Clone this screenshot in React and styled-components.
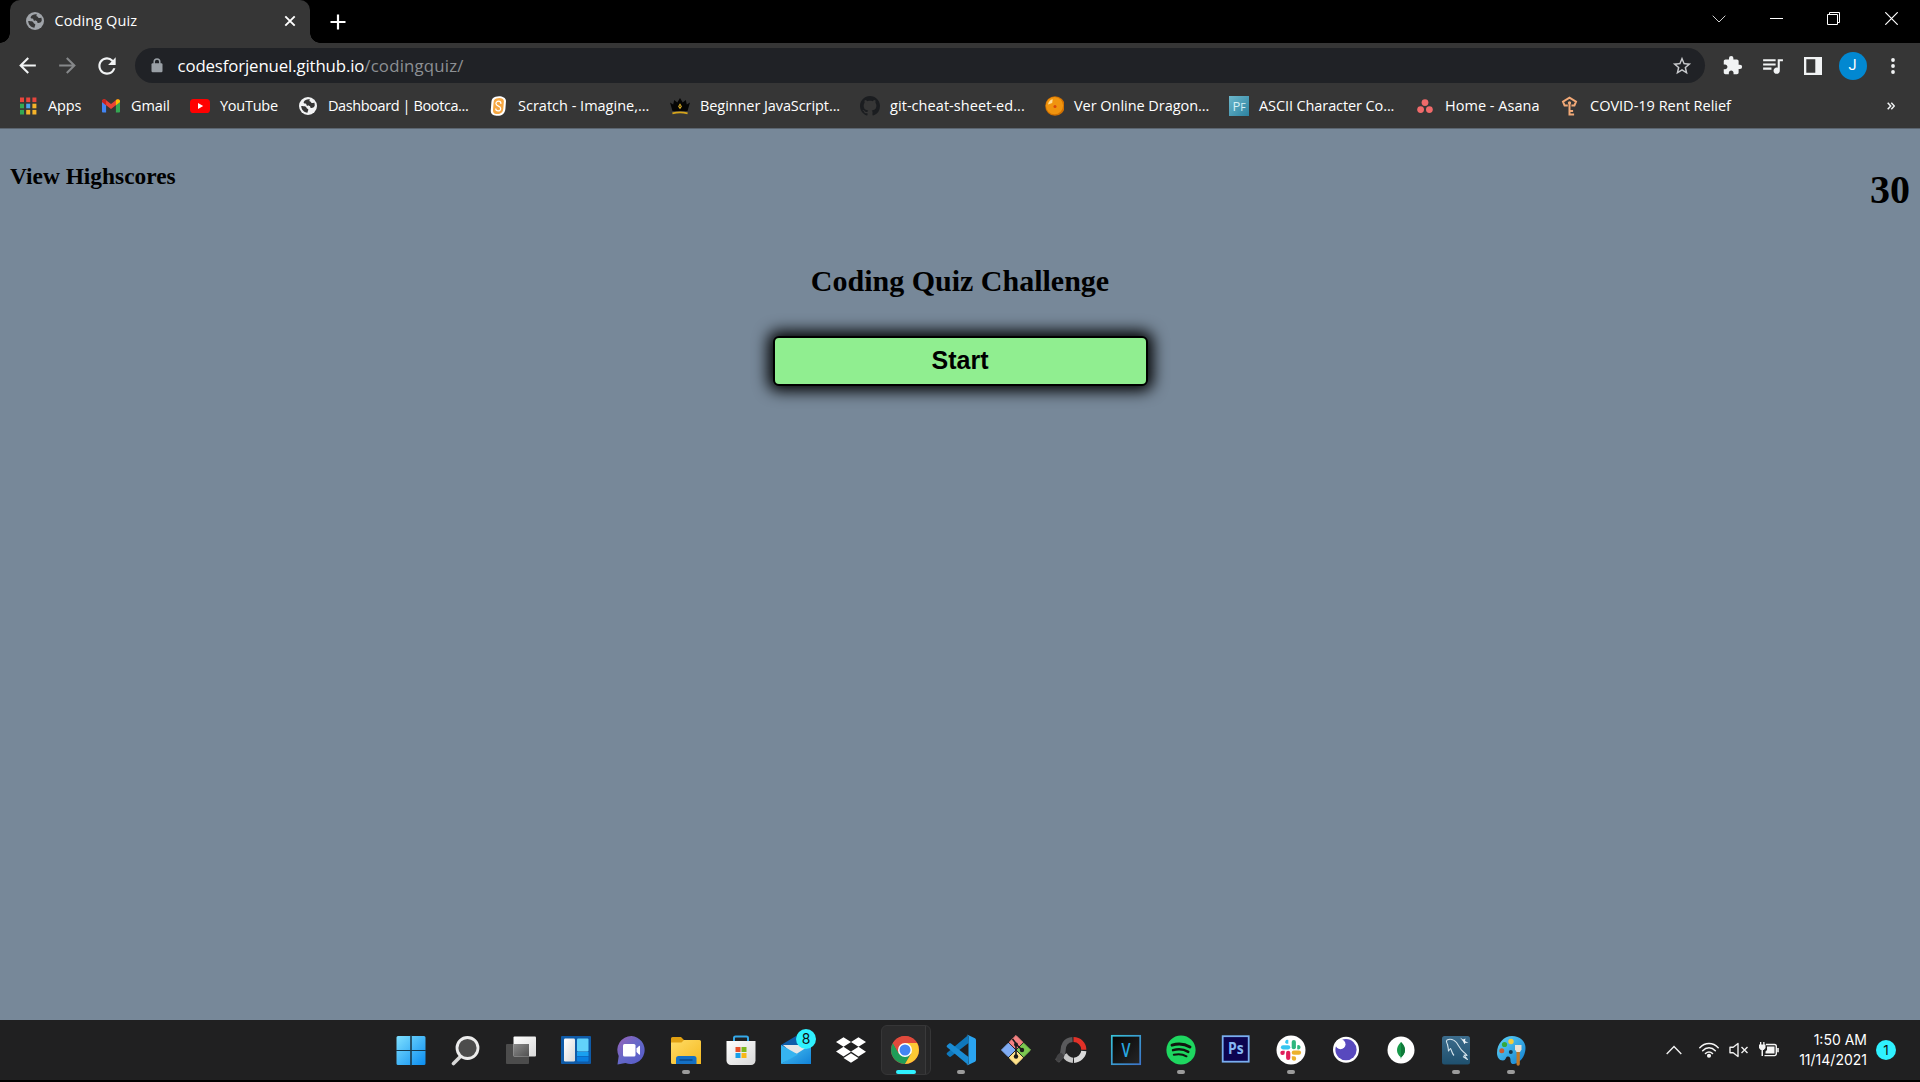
import React from "react";
import styled, { createGlobalStyle, css } from "styled-components";
import {
  MdExtension,
  MdQueueMusic,
  MdStarBorder,
  MdArrowBack,
  MdArrowForward,
  MdRefresh,
} from "react-icons/md";
import { FaDropbox } from "react-icons/fa";

const Global = createGlobalStyle`
  * { box-sizing: border-box; }
  body { margin: 0; background: #000; overflow: hidden; }
  svg { display: block; flex: none; }
`;

const ui = `"Open Sans", "Noto Sans", sans-serif`;

const Screen = styled.div`
  display: flex;
  flex-direction: column;
  width: 1920px;
  height: 1082px;
  background: #000;
`;

/* ---------- tab strip ---------- */

const TabStrip = styled.div`
  display: flex;
  height: 43px;
  background: #000;
`;

const TabCurve = styled.div`
  width: 10px;
  height: 43px;
  background: radial-gradient(circle 10px at ${(p) => (p.$right ? "100%" : "0")} 0, #000 95%, #363636 100%) 0 33px / 10px 10px no-repeat;
`;

const Tab = styled.div`
  display: flex;
  align-items: center;
  width: 300px;
  height: 43px;
  padding: 0 14px 1px 16px;
  border-radius: 10px 10px 0 0;
  background: #363636;
`;

const TabTitle = styled.span`
  flex: 1;
  margin-left: 10.5px;
  color: #fff;
  font: 14.5px/20px ${ui};
  letter-spacing: 0.1px;
  white-space: nowrap;
`;

const NewTab = styled.div`
  display: flex;
  align-items: center;
  margin-left: 9.5px;
`;

const WindowControls = styled.div`
  display: flex;
  margin-left: auto;
`;

const WindowControl = styled.div`
  display: flex;
  align-items: center;
  justify-content: center;
  width: 57.5px;
  height: 37px;
`;

/* ---------- toolbar ---------- */

const Toolbar = styled.div`
  display: flex;
  align-items: center;
  height: 45px;
  padding: 0 7.5px 0 7px;
  background: #363636;
`;

const ToolCell = styled.div`
  display: flex;
  align-items: center;
  justify-content: center;
  width: 40px;
  height: 40px;
`;

const Omnibox = styled.div`
  display: flex;
  align-items: center;
  flex: 1;
  height: 35px;
  margin: 0 7.5px 0 8px;
  padding: 0 12px 0 16px;
  border-radius: 18px;
  background: #202226;
`;

const Url = styled.div`
  flex: 1;
  margin-left: 14.5px;
  color: #fff;
  font: 16.8px/24px ${ui};
  letter-spacing: -0.12px;
  white-space: nowrap;
`;

const UrlPath = styled.span`
  color: #8d9094;
  letter-spacing: 0.2px;
`;

const Avatar = styled.div`
  width: 28px;
  height: 28px;
  border-radius: 50%;
  background: #0288d1;
  color: #fff;
  font: 14.5px/28px Roboto, sans-serif;
  text-align: center;
`;

/* ---------- bookmarks ---------- */

const Bookmarks = styled.div`
  display: flex;
  align-items: center;
  gap: 20px;
  height: 41px;
  padding: 0 25px 5px 18px;
  border-bottom: 1px solid #5b6570;
  background: #363636;
`;

const Bookmark = styled.div`
  display: flex;
  align-items: center;
  gap: 10px;
`;

const BookmarkLabel = styled.span`
  width: ${(p) => p.$width}px;
  color: #fff;
  font: 14.5px/20px ${ui};
  letter-spacing: ${(p) => p.$spacing || 0}px;
  white-space: nowrap;
`;

const Centered = styled.span`
  display: flex;
  justify-content: center;
  width: 20px;
`;

const Overflow = styled.div`
  margin-left: auto;
`;

/* ---------- page ---------- */

const Page = styled.main`
  flex: 1;
  background: #778899;
  color: #000;
  font-family: "Liberation Serif", serif;
`;

const PageHeader = styled.header`
  display: flex;
  justify-content: space-between;
  padding: 0 10px;
`;

const Highscores = styled.h3`
  margin: 34px 0 0;
  font-size: 23.4px;
  line-height: 27px;
`;

const Timer = styled.h1`
  margin: 38px 0 0;
  font-size: 40px;
  line-height: 46px;
`;

const Quiz = styled.section`
  display: flex;
  flex-direction: column;
  align-items: center;
  margin-top: 51px;
`;

const QuizTitle = styled.h2`
  margin: 0;
  font-size: 30px;
  line-height: 34px;
`;

const StartButton = styled.button`
  width: 375px;
  height: 50px;
  margin: 38px 0 0;
  padding: 0 0 2px;
  border: 2px solid #000;
  border-radius: 6px;
  background: #90ee90;
  box-shadow: 0 0 15px 5px #000;
  color: #000;
  font: bold 25px "Liberation Sans", sans-serif;
`;

/* ---------- taskbar ---------- */

const Taskbar = styled.footer`
  display: grid;
  grid-template-columns: 1fr auto 1fr;
  align-items: center;
  height: 60px;
  margin-bottom: 2px;
  background: #202021;
`;

const AppRow = styled.div`
  display: flex;
  grid-column: 2;
  padding-left: 1px;
`;

const AppSlot = styled.div`
  position: relative;
  display: flex;
  align-items: center;
  justify-content: center;
  width: 55px;
  height: 60px;
  ${(p) =>
    p.$state &&
    css`
      &::after {
        content: "";
        position: absolute;
        bottom: 6px;
        left: 50%;
        width: ${p.$state === "active" ? 20 : 8}px;
        height: 4px;
        border-radius: 2px;
        background: ${p.$state === "active" ? "#2ff1ff" : "#9b9b9b"};
        transform: translateX(-50%);
      }
    `}
`;

const ActiveFrame = styled.div`
  display: flex;
  align-items: center;
  justify-content: center;
  width: 50px;
  height: 50px;
  padding-right: 1px;
  border: 1px solid #363637;
  border-radius: 6px;
  background: linear-gradient(90deg, #2b2b2c 43px, #3a3a3b 43px, #3a3a3b 44px, #262627 44px);
`;

const Count = styled.span`
  position: absolute;
  top: 9px;
  right: 7px;
  width: 20px;
  height: 20px;
  border-radius: 50%;
  background: #2ff1ff;
  color: #111;
  font: 14px/20px Inter, sans-serif;
  text-align: center;
`;

const Tray = styled.div`
  display: flex;
  align-items: center;
  justify-content: flex-end;
  padding-right: 24px;
`;

const TrayIcons = styled.div`
  display: flex;
  align-items: center;
  gap: 10px;
`;

const Expand = styled.div`
  margin-right: 7px;
`;

const Clock = styled.div`
  width: 88px;
  color: #fff;
  font: 14px/20px Inter, sans-serif;
  text-align: right;
`;

const Notice = styled.div`
  width: 20px;
  height: 20px;
  margin-left: 9px;
  border-radius: 50%;
  background: #2ff1ff;
  color: #111;
  font: 13.5px/20px Inter, sans-serif;
  text-align: center;
`;

/* ---------- drawings ---------- */

const Globe = ({ ball, land }) => (
  <svg width="18" height="18" viewBox="0 0 18 18">
    <circle cx="9" cy="9" r="9" fill={ball} />
    <path
      d="M11 2.300C8.400 1.800 5.800 2.700 4.700 4.900c-.3 1 .6 1.500 1.600 1.600 1.200 0 1.100 1 1.200 1.800.8.800 2.200.2 3.200.7.9.6.3 1.700 1.200 2 1.500.2 3.200-.5 3.800-2.200.2-1.200 0-2.400-.5-3.400-.8.5-1.300.9-2.300.6-1-.2-.8-1.200-1.700-1.500-1-.2-1-1.200-.2-2.200z"
      fill={land}
    />
    <path d="M2.200 9c1.500.3 3.200-.2 4.600.8.9.7.6 1.700 1.600 1.900 1 .1 1.200 1 .7 1.900-.5.8-.1 1.300-.7 2.100C5 15.400 2.300 12.700 2.200 9z" fill={land} />
  </svg>
);

const AppsGrid = () => {
  const colors = ["#e8453c", "#e8453c", "#e8453c", "#34a853", "#4aa3f0", "#f5b32a", "#34a853", "#f5b32a", "#f5b32a"];
  return (
    <svg width="20" height="18" viewBox="0 0 20 18">
      {colors.map((c, i) => (
        <rect key={i} x={2 + (i % 3) * 6.2} y={0.5 + Math.floor(i / 3) * 6.2} width="4" height="4.6" fill={c} />
      ))}
    </svg>
  );
};

const Gmail = () => (
  <svg width="20" height="20" viewBox="0 0 20 20">
    <path d="M1 5v10.400c0 .7.500 1.200 1.200 1.200h2.900V8.500z" fill="#4285f4" />
    <path d="M19 5v10.400c0 .7-.5 1.200-1.200 1.200h-2.900V8.500z" fill="#34a853" />
    <path d="M1 5.200C1 3.300 3.200 2.700 4.500 3.700L10 7.900l5.500-4.200C16.800 2.700 19 3.300 19 5.200v.9L10 12.900 1 6.100z" fill="#ea4335" />
    <path d="M1 5.200C1 4 2 3.200 3 3.200c.8 0 1.500.4 2.100.9v5.100L1 6.100z" fill="#c5221f" />
    <path d="M19 5.200c0-1.200-1-2-2-2-.8 0-1.500.4-2.100.9v5.100L19 6.100z" fill="#fbbc04" />
  </svg>
);

const YouTube = () => (
  <svg width="20" height="20" viewBox="0 0 20 20">
    <rect y="3" width="20" height="14" rx="3.600" fill="#f00" />
    <path d="M8 7v6l5.200-3z" fill="#fff" />
  </svg>
);

const Scratch = () => (
  <svg width="20" height="20" viewBox="0 0 20 20">
    <path d="M7.500.8C11.500-.6 18 .5 18 5l-.6 8c-.4 5-4.400 7.300-9 6.800C4.200 19.500 2.500 17.500 2.800 14l.6-8C3.600 3 5 1.500 7.500.8z" fill="#fff" />
    <path d="M8.300 2.500c3-1 7.700-.6 7.600 2.700l-.6 7.500c-.4 4-3 5.600-6.700 5.300-2.900-.2-3.800-1.600-3.600-4.300l.6-7.400C5.700 4.200 6.600 3 8.300 2.500z" fill="#f6a742" />
    <path d="M13 7.900c-.1-1.700-1-2.700-2.400-2.700-1.500 0-2.700 1-2.700 2.400 0 3 4.800 2 4.800 4.800 0 1.500-1.200 2.500-2.700 2.500-1.400 0-2.300-.9-2.300-2.400" fill="none" stroke="#fff" strokeWidth="1.200" />
  </svg>
);

const Crown = () => (
  <svg width="20" height="20" viewBox="0 0 20 20">
    <path d="M0 6.500l3.200 2L4.200 4 7.300 6.500 10 2l2.700 4.500L15.800 4l1 4.500L20 6.500 17.500 15h-15z" fill="#050505" />
    <path d="M10 7.300l1.900 3.200L10 13.200l-1.900-2.700z" fill="#e0b020" />
    <circle cx="10" cy="10.300" r=".8" fill="#222" />
    <path d="M2.400 17.400c4.500-1.200 10.700-1.200 15.200 0" stroke="#d6a51b" strokeWidth="1.800" fill="none" />
  </svg>
);

const GitHub = () => (
  <svg width="20" height="20" viewBox="0 0 16 16">
    <path
      fill="#1b1d20"
      d="M8 0C3.580 0 0 3.580 0 8c0 3.540 2.290 6.530 5.470 7.590.4.070.55-.17.55-.38 0-.19-.01-.82-.01-1.490-2.010.37-2.530-.49-2.690-.94-.09-.23-.48-.94-.82-1.130-.28-.15-.68-.52-.01-.53.63-.01 1.080.58 1.230.82.72 1.210 1.870.87 2.330.66.07-.52.28-.87.51-1.070-1.780-.2-3.640-.89-3.640-3.950 0-.87.31-1.590.82-2.150-.08-.2-.36-1.020.08-2.120 0 0 .67-.21 2.200.82.64-.18 1.320-.27 2-.27s1.360.09 2 .27c1.530-1.040 2.200-.82 2.200-.82.44 1.100.16 1.920.08 2.120.51.56.82 1.270.82 2.150 0 3.070-1.870 3.750-3.650 3.950.29.25.54.73.54 1.480 0 1.070-.01 1.930-.01 2.200 0 .21.15.46.55.38A8.010 8.010 0 0 0 16 8c0-4.420-3.580-8-8-8z"
    />
  </svg>
);

const DragonBall = () => (
  <svg width="20" height="20" viewBox="0 0 20 20">
    <circle cx="11" cy="10" r="9.800" fill="#d07000" />
    <circle cx="10.500" cy="9.600" r="8.600" fill="#f0940e" />
    <path d="M4 8.500c.5-3 2.200-4.800 4.700-5.300L8.200 7z" fill="#ffdf98" />
    <circle cx="11" cy="10.500" r="1.500" fill="#d8480c" />
  </svg>
);

const TileText = styled.text`
  font: ${(p) => p.$font};
  text-anchor: middle;
`;

const Pf = () => (
  <svg width="20" height="20" viewBox="0 0 20 20">
    <defs>
      <linearGradient id="pf" x1="0" y1="0" x2="1" y2="1">
        <stop offset="0" stopColor="#6db8cc" />
        <stop offset="1" stopColor="#2c82a0" />
      </linearGradient>
    </defs>
    <rect width="20" height="20" fill="url(#pf)" />
    <TileText x="10" y="15" fill="#d6f0f5" $font='13px "Open Sans", sans-serif'>
      P<tspan fontSize="10.500">F</tspan>
    </TileText>
  </svg>
);

const Asana = () => (
  <svg width="20" height="20" viewBox="0 0 20 20">
    <g fill="#f06a6a">
      <circle cx="10" cy="6.600" r="3.400" />
      <circle cx="5.600" cy="13.600" r="3.400" />
      <circle cx="14.400" cy="13.600" r="3.400" />
    </g>
  </svg>
);

const RentKey = () => (
  <svg width="20" height="20" viewBox="0 0 20 20">
    <g fill="none" stroke="#f2a977" strokeWidth="2">
      <path d="M9.500 19.500V7M9.500 18.500h4.600M9.500 15h3.600" />
      <path d="M7.800 9.600H4.600L3 5.600 9.500 1.600l6.500 4-1.600 4h-3" />
    </g>
    <circle cx="9.500" cy="6.800" r="1.600" fill="#f2a977" />
  </svg>
);

const Gradient = ({ id, from, mid, to, down }) => (
  <linearGradient id={id} x1="0" y1="0" x2={down ? 0 : 1} y2="1">
    <stop offset="0" stopColor={from} />
    {mid && <stop offset=".5" stopColor={mid} />}
    <stop offset="1" stopColor={to} />
  </linearGradient>
);

const Gradients = () => (
  <svg width="0" height="0" aria-hidden="true">
    <defs>
      <Gradient id="win" from="#7fe0ff" to="#0a8df0" />
      <Gradient id="folder" from="#ffdc66" to="#f5b920" />
      <Gradient id="white" from="#fff" to="#d8d8d8" />
      <Gradient id="grey" from="#8a8a8a" to="#505050" />
      <Gradient id="chat" from="#9a62b8" mid="#6468c8" to="#5558c8" />
      <Gradient id="mail" from="#4cc6f4" to="#1282d8" />
      <Gradient id="dark" from="#050505" to="#262626" />
      <Gradient id="vframe" from="#38c2d8" to="#3c74c8" />
      <Gradient id="sql" from="#3c6c8c" to="#1f506e" down />
      <Gradient id="paint" from="#5fd4f8" to="#1180d0" />
    </defs>
  </svg>
);

const Icon = ({ children }) => (
  <svg width="32" height="32" viewBox="0 0 32 32">
    {children}
  </svg>
);

const Windows = () => (
  <Icon>
    <path d="M3 2h12.500v14H1.500V3.500A1.500 1.500 0 0 1 3 2z M16.500 2H29a1.500 1.500 0 0 1 1.500 1.500V16h-14z M1.500 17h14v14H3a1.500 1.500 0 0 1-1.500-1.500z M16.500 17h14v12.500A1.500 1.500 0 0 1 29 31H16.500z" fill="url(#win)" />
    <path d="M16 1v31M1 16.500h30" stroke="#15384d" strokeWidth="1" />
  </Icon>
);
const Search = () => (
  <Icon>
    <path d="M11 22l-7.500 7.500" stroke="#d8d8d8" strokeWidth="3.600" strokeLinecap="round" />
    <circle cx="17.500" cy="14" r="10.500" fill="#4c4c4c" stroke="#ececec" strokeWidth="2.800" />
  </Icon>
);
const TaskView = () => (
  <Icon>
    <rect x="1" y="10" width="23" height="20" rx="1" fill="#4c4c4c" />
    <rect x="8.500" y="2.500" width="22.500" height="20" rx="1" fill="url(#white)" />
    <rect x="8.500" y="10" width="15.500" height="12.500" fill="url(#grey)" />
  </Icon>
);
const Widgets = () => (
  <Icon>
    <rect x="1" y="2" width="30" height="28" rx="1" fill="#0f5ba8" />
    <rect x="4" y="4.500" width="11" height="23" rx="1.200" fill="url(#white)" />
    <rect x="17" y="4.500" width="11.500" height="13" rx="1" fill="#62d2fb" />
    <path d="M17 18h11.500v4H17z" fill="#1aa0f0" />
    <path d="M17 22.500h11.500v4a1 1 0 0 1-1 1H18a1 1 0 0 1-1-1z" fill="#0a7fe0" />
  </Icon>
);
const Chat = () => (
  <Icon>
    <path d="M16.500 2a14 14 0 1 1-6 27L2.500 30.500l1.200-8.500A14 14 0 0 1 16.500 2z" fill="url(#chat)" />
    <rect x="8" y="10" width="12.500" height="12.500" rx="1.500" fill="#fff" />
    <path d="M21.500 14.500l2.500-2.500c.6-.6 1-.2 1 .5v7.500c0 .7-.4 1.100-1 .5L21.500 18z" fill="#fff" />
  </Icon>
);
const Explorer = () => (
  <Icon>
    <path d="M1 4.500A1.500 1.500 0 0 1 2.500 3H11l3.500 3.500L12 11H1z" fill="#e0a012" />
    <path d="M1 8.500h10.500L14 6h15.500A1.500 1.500 0 0 1 31 7.500V30H2.500A1.500 1.500 0 0 1 1 28.500z" fill="url(#folder)" />
    <path d="M6 30v-5.500A2.500 2.500 0 0 1 8.500 22H24a2.500 2.500 0 0 1 2.500 2.500V30z" fill="#1470c4" />
    <path d="M9.500 26h13" stroke="#0a4a8c" strokeWidth="1.600" />
  </Icon>
);
const Store = () => (
  <Icon>
    <path d="M9 9V4a1.500 1.500 0 0 1 1.500-1.500h11A1.500 1.500 0 0 1 23 4v5" fill="none" stroke="#35a8e8" strokeWidth="2" />
    <path d="M1.500 7h29v19.500A4.500 4.500 0 0 1 26 31H6a4.500 4.500 0 0 1-4.500-4.500z" fill="url(#white)" />
    <path d="M10.500 13h5v5h-5z" fill="#e8502a" />
    <path d="M16.500 13h5v5h-5z" fill="#7db81c" />
    <path d="M10.500 19h5v5h-5z" fill="#18a0e8" />
    <path d="M16.500 19h5v5h-5z" fill="#f8b818" />
  </Icon>
);
const Mail = () => (
  <Icon>
    <path d="M1 11L16 2l15 9v6H1z" fill="#0f5ca8" />
    <path d="M3 11h26l-7 10-10-2z" fill="#e6e6e6" />
    <path d="M31 10.500V30H1z" fill="url(#mail)" />
    <path d="M1 11l17 9.500L1 30z" fill="#36b4f0" />
  </Icon>
);
const Dropbox = () => <FaDropbox size={30} color="#fff" />;
const Chrome = () => (
  <Icon>
    <circle cx="16" cy="16" r="14" fill="#e04a3c" />
    <path d="M3.900 9A14 14 0 0 0 16 30l6.100-10.500-6.100-3.500-6.100 3.500z" fill="#1f9d58" />
    <path d="M28.100 9A14 14 0 0 1 16 30l6.200-10.500L16 9z" fill="#fcc934" />
    <path d="M3.900 9A14 14 0 0 1 28.100 9H16l-6 10.500z" fill="#e04a3c" />
    <circle cx="16" cy="16" r="7" fill="#fff" />
    <circle cx="16" cy="16" r="5.500" fill="#4285f4" />
  </Icon>
);
const VSCode = () => (
  <Icon>
    <path d="M23 1.200L23.500 9 6 22.500c-.6.500-1.300.5-1.900 0l-2-1.800c-.6-.6-.6-1.300 0-1.900z" fill="#0f78bc" />
    <path d="M23 30.800L23.500 23 6 9.500c-.6-.5-1.300-.5-1.900 0l-2 1.800c-.6.600-.6 1.300 0 1.900z" fill="#1a8cd4" />
    <path d="M23 1l7 3.300c.6.300 1 .9 1 1.600v20.200c0 .7-.4 1.300-1 1.600L23 31c-.8.300-1 .1-1.500-.5 1 .5 2-.2 2-1.300V2.800c0-1.100-1-1.800-2-1.300.5-.6.700-.8 1.500-.5z" fill="#2aa4f0" />
  </Icon>
);
const Git = () => (
  <Icon>
    <g strokeLinejoin="round" strokeWidth="1">
      <path d="M16 1.500l6.800 6.800L16 15 9.200 8.300z" fill="#f48282" stroke="#f48282" />
      <path d="M23.700 9.200l6.800 6.800-6.800 6.800L17 16z" fill="#7cc850" stroke="#7cc850" />
      <path d="M16 17l6.800 6.800L16 30.500l-6.800-6.700z" fill="#ffe28a" stroke="#ffe28a" />
      <path d="M8.300 9.200L15 16l-6.700 6.800L1.500 16z" fill="#80acf4" stroke="#80acf4" />
    </g>
    <path d="M12.500 5l3.500 4.500v13M16.500 10.500l5 5" fill="none" stroke="#1a1a1a" strokeWidth="1.600" />
    <circle cx="16" cy="10.500" r="2" fill="#1a1a1a" />
    <circle cx="22" cy="16" r="2.200" fill="#1a1a1a" />
    <circle cx="16" cy="22.500" r="2.200" fill="#1a1a1a" />
  </Icon>
);
const Ring = () => (
  <Icon>
    <g fill="none" strokeWidth="5.200">
      <path d="M18.500 5.500A10.300 10.300 0 0 1 28.800 15.800" stroke="#e23128" />
      <path d="M28.800 17A10.300 10.300 0 0 1 19 26.300" stroke="#dadada" />
      <path d="M18 26.300A10.300 10.300 0 0 1 9.500 20.500" stroke="#c8c8c8" />
      <path d="M17.500 5.500C10 6 8 12 8 17c0 5-2.500 6-6 10" stroke="#5a5a5c" />
    </g>
    <path d="M2 28c-2-4 0-8 4-9.500l3 3c0 3-3 6-7 6.500z" fill="#424244" />
  </Icon>
);
const Vegas = () => (
  <Icon>
    <rect x="1.800" y="1.800" width="28.400" height="28.400" fill="url(#dark)" stroke="url(#vframe)" strokeWidth="1.700" />
    <TileText x="16" y="23" fill="#28a8e0" $font='600 20px "Open Sans", sans-serif' transform="translate(4.500 0) scale(.72 1)">
      V
    </TileText>
  </Icon>
);
const Spotify = () => (
  <Icon>
    <circle cx="16" cy="16" r="14.600" fill="#1ed760" />
    <g fill="none" stroke="#10160f" strokeLinecap="round">
      <path d="M7 11.200c6-1.800 13-1.100 18 1.900" strokeWidth="2.900" />
      <path d="M8 16.200c5-1.500 11-.9 15.300 1.700" strokeWidth="2.400" />
      <path d="M8.800 20.800c4.500-1.200 9-.7 12.700 1.500" strokeWidth="2" />
    </g>
  </Icon>
);
const Photoshop = () => (
  <Icon>
    <rect x="2.700" y="2.200" width="26" height="25.500" fill="#0c0450" stroke="#79aef0" strokeWidth="1.800" />
    <TileText x="15.800" y="20.500" fill="#84b8f4" $font='bold 16px "Open Sans", sans-serif' transform="translate(2 0) scale(.87 1)">
      Ps
    </TileText>
  </Icon>
);
const Slack = () => (
  <Icon>
    <circle cx="16" cy="16" r="14.500" fill="#fff" />
    <g strokeWidth="4.200" strokeLinecap="round">
      <path d="M8 13.300h5.200" stroke="#36c5f0" />
      <path d="M18.800 8v5.200" stroke="#2eb67d" />
      <path d="M18.800 18.700H24" stroke="#ecb22e" />
      <path d="M13.200 18.800V24" stroke="#e01e5a" />
    </g>
    <path d="M13.300 6a2 2 0 1 0-2 3.800h2z" fill="#36c5f0" />
    <path d="M22.700 15.300a2.200 2.200 0 1 0 0-4.200 2 2 0 0 0-.5 1.500v2.700z" fill="#2eb67d" />
    <path d="M16.800 22.300v2a2.200 2.200 0 1 0 2-2z" fill="#ecb22e" />
    <path d="M9.700 16.700h-2a2.200 2.200 0 1 0 2 2z" fill="#e01e5a" />
  </Icon>
);
const Insomnia = () => (
  <Icon>
    <circle cx="16" cy="15.700" r="13" fill="#fff" />
    <circle cx="16" cy="15.700" r="10.600" fill="#5849be" />
    <circle cx="10.500" cy="10.200" r="5" fill="#fff" />
  </Icon>
);
const Mongo = () => (
  <Icon>
    <circle cx="16" cy="16" r="13.500" fill="#fff" />
    <path d="M16 8c3 3 4 5.500 4 8.200 0 3-1.700 5-3.600 6.800l-.2 1.500h-.5l-.2-1.500c-2-1.800-3.500-3.800-3.500-6.800C12 13.500 13 11 16 8z" fill="#17994a" />
    <path d="M16 8c3 3 4 5.500 4 8.200 0 3-1.700 5-3.600 6.800H16z" fill="#107a3a" />
  </Icon>
);
const MySql = () => (
  <Icon>
    <rect x="2" y="2" width="28" height="28.500" rx="2.500" fill="url(#sql)" />
    <g fill="none" stroke="#d4e4ec" strokeWidth="1.100" strokeLinejoin="round">
      <path d="M7 6c3-1.500 7-.5 9.500 2.500 2.500 3.500 4 7.500 7 9.500 1.500 1 2.500 2 3.500 3.500l-3-.5 3.500 4.500-4.500-3" />
      <path d="M7 6c-1.500 1.500 0 3 .5 4.500.5 2 .8 4 1 6.500l2-2.500c1.500 2 1 4.500 3.500 7" />
    </g>
    <path d="M20 3.500l3 2 2.500-1-.5 2.500 3.500 2-3-.3-1 1.500-1.500-3z" fill="#eef4f8" />
  </Icon>
);
const Paint = () => (
  <Icon>
    <path d="M17 2c8 0 13.500 5 13.500 12 0 9-6.500 15.500-11.500 16-3 .3-3.500-2-3.500-4s-1-4-3-3.500-1.500 4-4.500 4C4 26.500 2 23 2 19 2 9.500 9 2 17 2z" fill="url(#paint)" />
    <circle cx="16" cy="7.500" r="2.700" fill="#f4cc3c" />
    <circle cx="9.500" cy="10.500" r="2.600" fill="#34a83c" />
    <circle cx="6.800" cy="16.800" r="2.500" fill="#c85a30" />
    <circle cx="15.800" cy="18" r="2" fill="#14384e" />
    <path d="M21.500 17h3.300V30a1.600 1.600 0 0 1-3.300 0z" fill="#c07828" />
    <path d="M20 11h6.500v4.500L25 18h-3.500L20 15.500z" fill="#e8e0d4" />
  </Icon>
);

const taskbarApps = [
  { Art: Windows },
  { Art: Search },
  { Art: TaskView },
  { Art: Widgets },
  { Art: Chat },
  { Art: Explorer, state: "open" },
  { Art: Store },
  { Art: Mail, count: 8 },
  { Art: Dropbox },
  { Art: Chrome, state: "active" },
  { Art: VSCode, state: "open" },
  { Art: Git },
  { Art: Ring },
  { Art: Vegas },
  { Art: Spotify, state: "open" },
  { Art: Photoshop },
  { Art: Slack, state: "open" },
  { Art: Insomnia },
  { Art: Mongo },
  { Art: MySql, state: "open" },
  { Art: Paint, state: "open" },
];

const Site = () => (
  <Centered>
    <Globe ball="#f2f3f4" land="#363636" />
  </Centered>
);

const bookmarks = [
  { Art: AppsGrid, label: "Apps", width: 33, spacing: -0.1 },
  { Art: Gmail, label: "Gmail", width: 39, spacing: -0.1 },
  { Art: YouTube, label: "YouTube", width: 58, spacing: -0.25 },
  { Art: Site, label: "Dashboard | Bootca...", width: 140, spacing: -0.4 },
  { Art: Scratch, label: "Scratch - Imagine,...", width: 132 },
  { Art: Crown, label: "Beginner JavaScript...", width: 140, spacing: -0.08 },
  { Art: GitHub, label: "git-cheat-sheet-ed...", width: 134, spacing: 0.06 },
  { Art: DragonBall, label: "Ver Online Dragon...", width: 135, spacing: -0.04 },
  { Art: Pf, label: "ASCII Character Co...", width: 136, spacing: -0.1 },
  { Art: Asana, label: "Home - Asana", width: 95, spacing: 0.02 },
  { Art: RentKey, label: "COVID-19 Rent Relief", width: 141 },
];

export default function App() {
  return (
    <Screen>
      <Global />
      <TabStrip>
        <TabCurve />
        <Tab>
          <Globe ball="#a0a4a9" land="#363636" />
          <TabTitle>Coding Quiz</TabTitle>
          <svg width="12" height="12" viewBox="0 0 12 12">
            <path d="M1.300 1.300l9.400 9.400M10.700 1.300l-9.400 9.400" stroke="#fff" strokeWidth="1.900" />
          </svg>
        </Tab>
        <TabCurve $right />
        <NewTab>
          <svg width="16" height="16" viewBox="0 0 16 16">
            <path d="M8 .5v15M.5 8h15" stroke="#fff" strokeWidth="2.200" />
          </svg>
        </NewTab>
        <WindowControls>
          <WindowControl>
            <svg width="14" height="8" viewBox="0 0 14 8">
              <path d="M.7.700L7 7 13.300.7" fill="none" stroke="#d0d0d0" />
            </svg>
          </WindowControl>
          <WindowControl>
            <svg width="13" height="1" viewBox="0 0 13 1">
              <rect width="13" height="1" fill="#fff" />
            </svg>
          </WindowControl>
          <WindowControl>
            <svg width="13" height="13" viewBox="0 0 13 13">
              <path d="M.5 2.500h10v10H.5zM2.500 2.500V.5h10v10h-2" fill="none" stroke="#fff" />
            </svg>
          </WindowControl>
          <WindowControl>
            <svg width="13" height="13" viewBox="0 0 13 13">
              <path d="M.3.300l12.400 12.400M12.700.3L.3 12.700" stroke="#fff" strokeWidth="1.200" />
            </svg>
          </WindowControl>
        </WindowControls>
      </TabStrip>

      <Toolbar>
        <ToolCell><MdArrowBack size={25} color="#f1f3f4" /></ToolCell>
        <ToolCell><MdArrowForward size={25} color="#86888a" /></ToolCell>
        <ToolCell><MdRefresh size={26} color="#f1f3f4" /></ToolCell>
        <Omnibox>
          <svg width="12" height="15" viewBox="0 0 12 15">
            <rect x=".5" y="5.300" width="11" height="9" rx="1.200" fill="#9aa0a6" />
            <path d="M3.200 6V3.700a2.800 2.800 0 0 1 5.600 0V6" fill="none" stroke="#9aa0a6" strokeWidth="1.500" />
          </svg>
          <Url>codesforjenuel.github.io<UrlPath>/codingquiz/</UrlPath></Url>
          <MdStarBorder size={22} color="#c8cacd" />
        </Omnibox>
        <ToolCell><MdExtension size={21} color="#f1f3f4" /></ToolCell>
        <ToolCell><MdQueueMusic size={25} color="#f1f3f4" /></ToolCell>
        <ToolCell>
          <svg width="18" height="18" viewBox="0 0 18 18">
            <path d="M0 0h18v18H0zM2.300 2.300v13.400h9V2.300z" fillRule="evenodd" fill="#f1f3f4" />
          </svg>
        </ToolCell>
        <ToolCell><Avatar>J</Avatar></ToolCell>
        <ToolCell>
          <svg width="4" height="16" viewBox="0 0 4 16">
            <g fill="#f1f3f4">
              <circle cx="2" cy="2" r="1.900" />
              <circle cx="2" cy="8" r="1.900" />
              <circle cx="2" cy="14" r="1.900" />
            </g>
          </svg>
        </ToolCell>
      </Toolbar>

      <Bookmarks>
        {bookmarks.map(({ Art, label, width, spacing }) => (
          <Bookmark key={label}>
            <Art />
            <BookmarkLabel $width={width} $spacing={spacing}>{label}</BookmarkLabel>
          </Bookmark>
        ))}
        <Overflow>
          <svg width="8" height="8" viewBox="0 0 8 8">
            <path d="M.7.700L3.700 4l-3 3.300M4.300.7l3 3.300-3 3.300" fill="none" stroke="#f1f3f4" strokeWidth="1.500" />
          </svg>
        </Overflow>
      </Bookmarks>

      <Page>
        <PageHeader>
          <Highscores>View Highscores</Highscores>
          <Timer>30</Timer>
        </PageHeader>
        <Quiz>
          <QuizTitle>Coding Quiz Challenge</QuizTitle>
          <StartButton>Start</StartButton>
        </Quiz>
      </Page>

      <Taskbar>
        <AppRow>
          {taskbarApps.map(({ Art, state, count }, i) => (
            <AppSlot key={i} $state={state}>
              {state === "active" ? <ActiveFrame><Art /></ActiveFrame> : <Art />}
              {count && <Count>{count}</Count>}
            </AppSlot>
          ))}
        </AppRow>
        <Tray>
          <TrayIcons>
            <Expand>
              <svg width="16" height="10" viewBox="0 0 16 10">
                <path d="M.7 9L8 1.500 15.300 9" fill="none" stroke="#f0f0f0" strokeWidth="1.400" />
              </svg>
            </Expand>
            <svg width="20" height="18" viewBox="0 0 20 18">
              <g fill="none" stroke="#f4f4f4" strokeWidth="1.500" strokeLinecap="round">
                <path d="M.8 6.800c5.200-5.600 13.200-5.600 18.400 0M3.700 9.700c3.600-3.800 9-3.800 12.600 0M6.500 12.500c2-2.100 5-2.100 7 0" />
                <circle cx="10" cy="14.800" r="1.300" fill="#f4f4f4" />
              </g>
            </svg>
            <svg width="20" height="16" viewBox="0 0 20 16">
              <path d="M1 5.200h3.200L9 1.500v13L4.200 10.800H1z" fill="none" stroke="#f0f0f0" strokeWidth="1.400" strokeLinejoin="round" />
              <path d="M12.500 5l6 6M18.500 5l-6 6" stroke="#f0f0f0" strokeWidth="1.400" />
            </svg>
            <svg width="20" height="16" viewBox="0 0 20 16">
              <path d="M7 2.500h8.500A1.800 1.800 0 0 1 17.300 4.300v7.500a1.800 1.800 0 0 1-1.800 1.800H5.500" fill="none" stroke="#f4f4f4" strokeWidth="1.400" />
              <path d="M8 4.500h7.500v7H6.500V9.500L8 8zM18.200 6h1.600v4.200h-1.600z" fill="#f4f4f4" />
              <path d="M0 2.500h6.500V6L4.800 8H1.700L0 6zM1 0h1.300v3H1zM4.200 0h1.300v3H4.200zM2.500 8H4v6H2.500z" fill="#f4f4f4" />
            </svg>
          </TrayIcons>
          <Clock>
            <div>1:50 AM</div>
            <div>11/14/2021</div>
          </Clock>
          <Notice>1</Notice>
        </Tray>
      </Taskbar>
      <Gradients />
    </Screen>
  );
}
